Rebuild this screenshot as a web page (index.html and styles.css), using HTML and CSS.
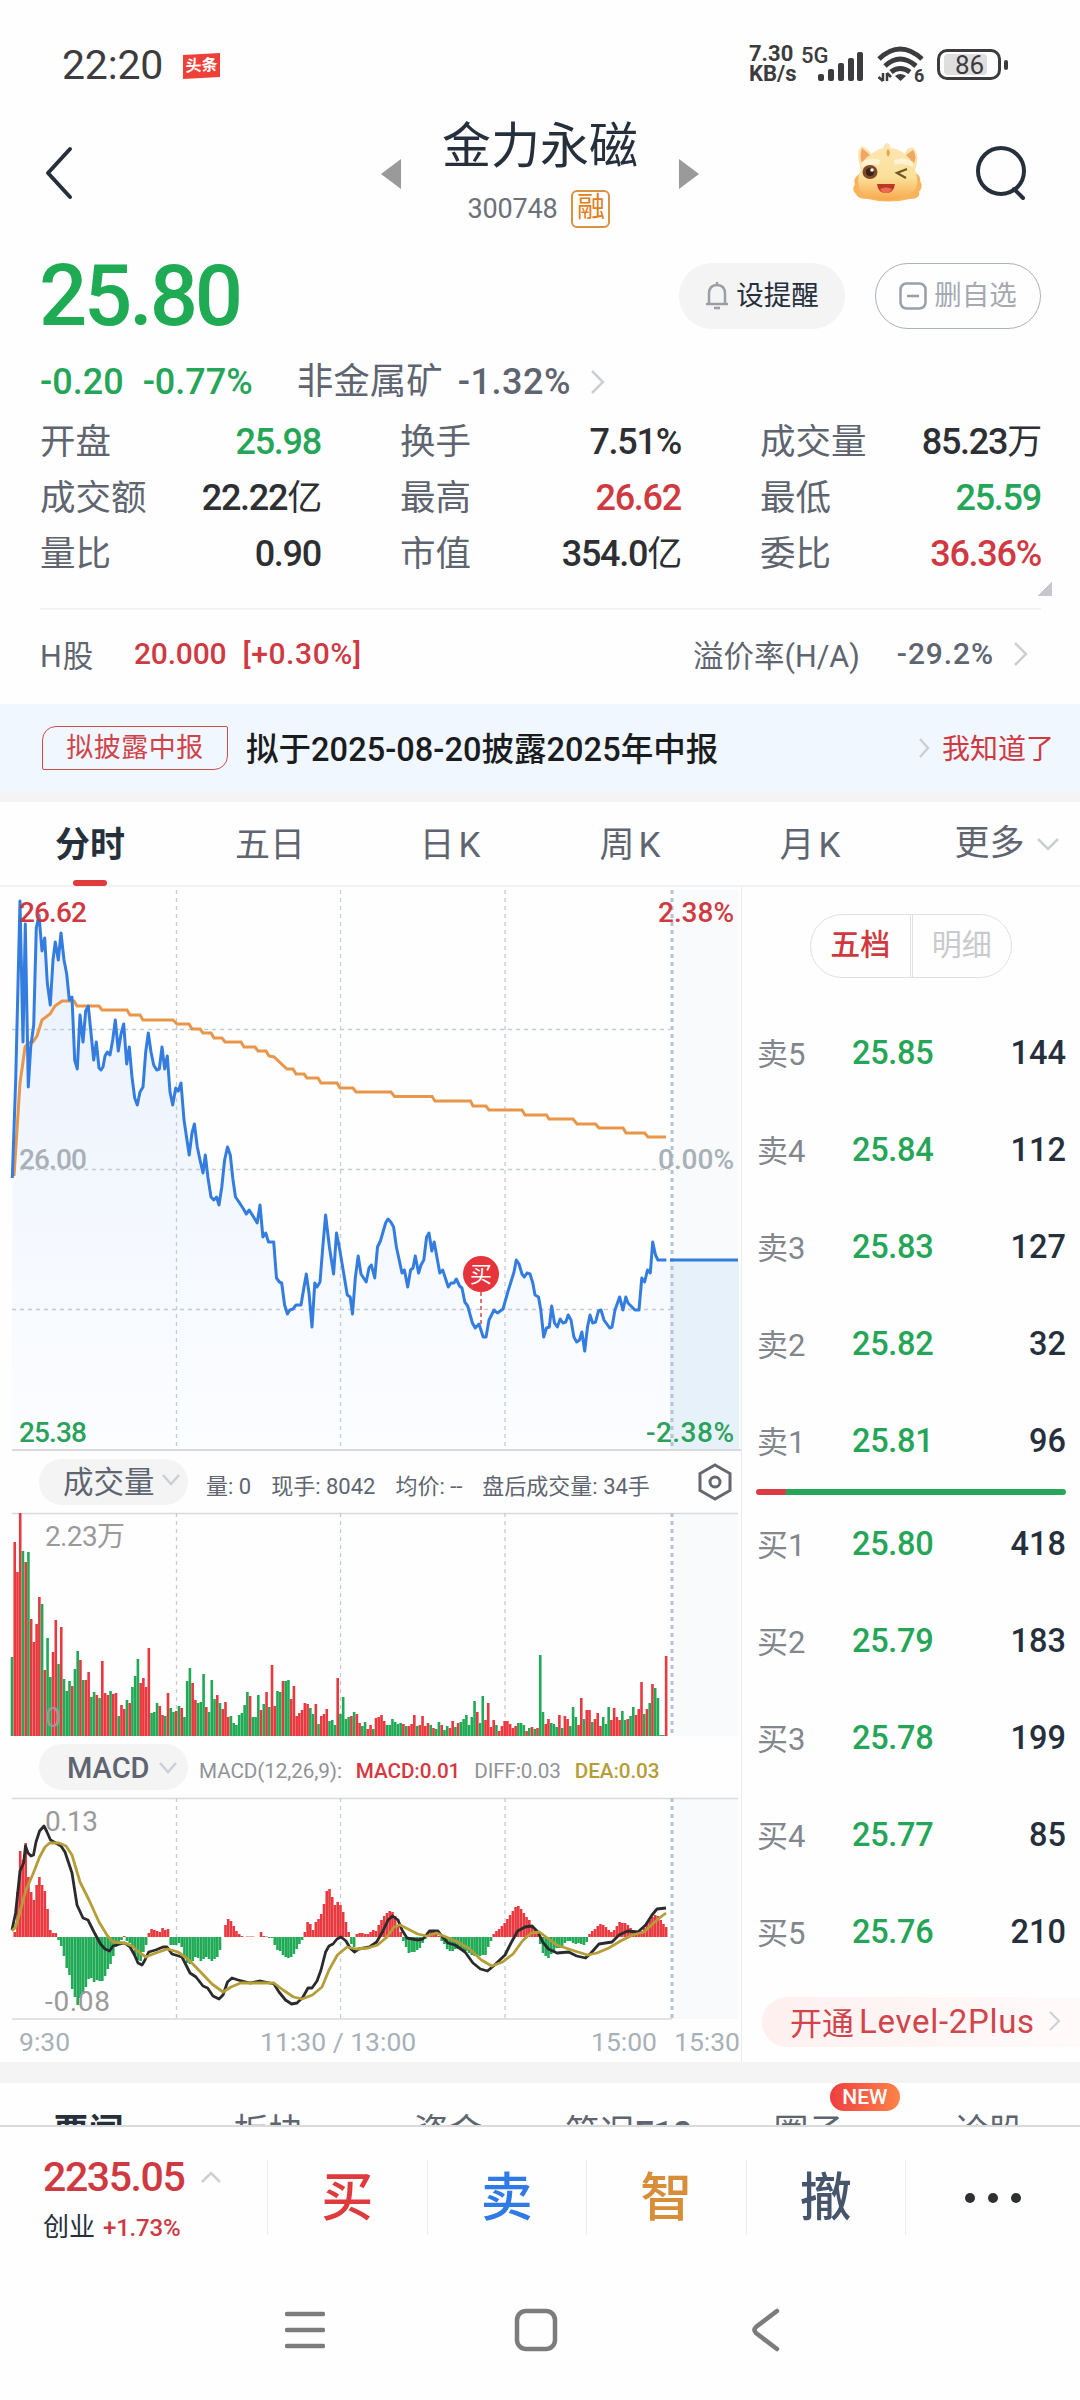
FILE: index.html
```html
<!DOCTYPE html>
<html lang="zh-CN">
<head>
    <meta charset="UTF-8">
    <meta name="viewport" content="width=device-width, initial-scale=1.0">
    <title>金力永磁 300748</title>
    <link rel="stylesheet" href="styles.css">
</head>
<body>
    <div class="status-bar">
        <span class="clock">22:20</span>
        <span class="toutiao">头条</span>
        <div class="status-right">
            <div class="speed"><span>7.30</span><span>KB/s</span></div>
            <span class="net">5G</span>
            <svg class="signal" width="44" height="32" viewBox="0 0 44 32" fill="#3c3c3e">
                <rect x="0" y="23" width="6" height="7" rx="2"/>
                <rect x="10" y="18" width="6" height="12" rx="2"/>
                <rect x="20" y="12" width="6" height="18" rx="2"/>
                <rect x="30" y="7" width="6" height="23" rx="2"/>
                <rect x="39" y="1" width="6" height="29" rx="2"/>
            </svg>
            <svg class="wifi" width="48" height="38" viewBox="0 0 48 38" fill="none" stroke="#3c3c3e" stroke-width="5">
                <path d="M2 13 Q23 -7 45 13"/>
                <path d="M8 20 Q23 6 39 20"/>
                <path d="M14 26 Q23 19 33 26"/>
                <path d="M18 30 Q23 26 29 30 L23.500 35 Z" fill="#3c3c3e" stroke="none"/>
                <path d="M6 27 V35 M1.500 31 L6 35 M10 35 V27 M10 27 L14 31" stroke-width="2.500"/>
                <text x="37" y="36" font-size="18" font-weight="700" fill="#3c3c3e" stroke="none">6</text>
            </svg>
            <div class="battery"><span>86</span></div>
        </div>
    </div>

    <div class="header">
        <svg class="back" width="30" height="54" viewBox="0 0 30 54"><path d="M26 3 L4 27 L26 51"/></svg>
        <div class="title-group">
            <svg width="20" height="30" viewBox="0 0 20 30"><path d="M20 0 L0 15 L20 30 Z" fill="#9a9a9a"/></svg>
            <div class="title">
                <h1>金力永磁</h1>
                <div class="code"><span>300748</span><span class="rong">融</span></div>
            </div>
            <svg width="20" height="30" viewBox="0 0 20 30"><path d="M0 0 L20 15 L0 30 Z" fill="#9a9a9a"/></svg>
        </div>
        <svg class="mascot" width="72" height="64" viewBox="0 0 72 64">
            <defs>
                <linearGradient id="face" x1="0" y1="0" x2="0" y2="1">
                    <stop offset="0" stop-color="#fde6b4"/>
                    <stop offset="0.6" stop-color="#fce09a"/>
                    <stop offset="1" stop-color="#f6a94e"/>
                </linearGradient>
            </defs>
            <path d="M9 33 Q0 38 3 44 Q-1 50 4 54 Q5 59 16 59 Q36 64 58 59 Q69 59 67 52 Q72 46 68 41 Q69 35 63 33 Z" fill="#f7b45c"/>
            <path d="M9 30 Q3 10 10 6 Q17 9 19 14 Q26 9 31 8 Q35 -2 39 8 Q47 9 53 14 Q55 6 62 8 Q68 16 63 30 Q68 44 62 51 Q50 60 36 60 Q16 60 8 50 Q4 40 9 30 Z" fill="url(#face)"/>
            <path d="M10 8 Q7 17 10 23 Q14 17 18 15 Z M61 10 Q66 18 61 24 Q58 18 54 15 Z" fill="#f0a763"/>
            <path d="M36 9 Q40 12 36 17 Q33 12 36 9" fill="#e2a950"/>
            <path d="M10 22 Q18 16 28 20 L27 25 Q18 23 9 27 Z M42 20 Q52 16 61 22 L61 27 Q52 22 43 25 Z" fill="#fff3d3"/>
            <ellipse cx="18" cy="32" rx="7.500" ry="7" fill="#7b4a2b"/>
            <circle cx="18" cy="32" r="4" fill="#3c2114"/>
            <circle cx="20" cy="30" r="1.800" fill="#fff"/>
            <path d="M55 29 L45 33 L54 38" fill="none" stroke="#6b5a20" stroke-width="2.200"/>
            <path d="M25 44 H43 Q42 53 34 53 Q26 53 25 44 Z" fill="#b93a24"/>
            <path d="M28 49 Q34 46 40 49 Q38 53 34 53 Q30 53 28 49" fill="#ee6a50"/>
        </svg>
        <svg class="search" width="54" height="56" viewBox="0 0 54 56"><circle cx="25" cy="25" r="23"/><path d="M38 43 L47 52"/></svg>
    </div>

    <div class="price-row">
        <span class="price">25.80</span>
        <div class="actions">
            <div class="pill remind">
                <svg width="24" height="28" viewBox="0 0 24 28"><path d="M1 22 H23 M4 22 V12 Q4 3 12 3 Q20 3 20 12 V22 M9 26 H15 M12 3 V0"/></svg>
                设提醒
            </div>
            <div class="pill remove">
                <svg width="28" height="28" viewBox="0 0 28 28"><rect x="1.500" y="1.500" width="25" height="25" rx="6"/><path d="M8 14 H20"/></svg>
                删自选
            </div>
        </div>
    </div>

    <div class="change-row">
        <span class="green num">-0.20</span>
        <span class="green num pct">-0.77%</span>
        <span class="industry">非金属矿</span>
        <span class="num ind-pct">-1.32%</span>
        <svg class="chev" width="16" height="26" viewBox="0 0 16 26"><path d="M2 2 L13 13 L2 24"/></svg>
    </div>

    <div class="stats">
        <div class="stat"><span>开盘</span><b class="green">25.98</b></div>
        <div class="stat"><span>换手</span><b>7.51%</b></div>
        <div class="stat"><span>成交量</span><b>85.23<i>万</i></b></div>
        <div class="stat"><span>成交额</span><b>22.22<i>亿</i></b></div>
        <div class="stat"><span>最高</span><b class="red">26.62</b></div>
        <div class="stat"><span>最低</span><b class="green">25.59</b></div>
        <div class="stat"><span>量比</span><b>0.90</b></div>
        <div class="stat"><span>市值</span><b>354.0<i>亿</i></b></div>
        <div class="stat"><span>委比</span><b class="red">36.36%</b></div>
    </div>
    <div class="expand"></div>

    <div class="h-share">
        <span class="h-name">H股</span>
        <span class="red num">20.000</span>
        <span class="red num h-pct">[+0.30%]</span>
        <span class="premium">溢价率(H/A)</span>
        <span class="num h-rate">-29.2%</span>
        <svg class="chev" width="16" height="26" viewBox="0 0 16 26"><path d="M2 2 L13 13 L2 24"/></svg>
    </div>

    <div class="notice">
        <span class="tag">拟披露中报</span>
        <span class="notice-text">拟于2025-08-20披露2025年中报</span>
        <svg class="chev" width="13" height="22" viewBox="0 0 13 22"><path d="M2 2 L10 11 L2 20"/></svg>
        <span class="know">我知道了</span>
    </div>

    <div class="tabs">
        <span class="tab active">分时</span>
        <span class="tab">五日</span>
        <span class="tab">日<i>K</i></span>
        <span class="tab">周<i>K</i></span>
        <span class="tab">月<i>K</i></span>
        <span class="tab more">更多<svg class="chev" width="22" height="14" viewBox="0 0 22 14"><path d="M1 2 L11 12 L21 2"/></svg></span>
    </div>

    <div class="main">
        <div class="charts">
            <svg id="price-chart" width="741" height="563" viewBox="0 0 741 563">
                <defs>
                    <linearGradient id="area" x1="0" y1="0" x2="0" y2="1">
                        <stop offset="0" stop-color="#e9f1fd"/>
                        <stop offset="1" stop-color="#fcfdff"/>
                    </linearGradient>
                </defs>
                <rect x="672" y="2" width="66" height="560" fill="#f9fafb"/>
                <rect x="669" y="372" width="70" height="190" fill="#e7f1fa"/>
                <path id="price-area" fill="url(#area)"/>
                <g class="grid">
                    <path d="M176.500 2 V561 M340.500 2 V561 M505 2 V561 M12 141.500 H670 M12 281.500 H670 M12 421.500 H670"/>
                    <path d="M672 2 V561" class="close-line"/>
                </g>
                <path d="M12 562 H741" stroke="#d8dadd" stroke-width="2"/>
                <polyline id="avg-line" fill="none" stroke="#e8964a" stroke-width="3"/>
                <polyline id="price-line" fill="none" stroke="#347de0" stroke-width="3" stroke-linejoin="round"/>
                <path d="M670 372 H738" stroke="#347de0" stroke-width="3"/>
                <path d="M481 404 V438" stroke="#d9484e" stroke-width="1.500" stroke-dasharray="4 3"/>
                <circle cx="481" cy="386" r="18" fill="#e5343c"/>
                <text x="481" y="394" font-size="22" fill="#fff" text-anchor="middle">买</text>
                <g class="label strong">
                    <text x="19" y="34" textLength="68" fill="#cf3a42">26.62</text>
                    <text x="658" y="34" textLength="76" fill="#cf3a42">2.38%</text>
                    <text x="19" y="281" textLength="68" fill="#a8b0b8">26.00</text>
                    <text x="658" y="281" textLength="76" fill="#a8b0b8">0.00%</text>
                    <text x="19" y="554" textLength="68" fill="#2aa25a">25.38</text>
                    <text x="646" y="554" textLength="88" fill="#2aa25a">-2.38%</text>
                </g>
            </svg>

            <div class="indicator vol-head">
                <div class="select">成交量<svg class="chev" width="18" height="12" viewBox="0 0 18 12"><path d="M1 1 L9 10 L17 1"/></svg></div>
                <div class="vol-info">
                    <span>量: 0</span><span>现手: 8042</span><span>均价: --</span><span>盘后成交量: 34手</span>
                </div>
                <svg class="gear" width="36" height="38" viewBox="0 0 36 38"><path d="M18 2 L33 10.500 V27.500 L18 36 L3 27.500 V10.500 Z"/><circle cx="18" cy="19" r="5"/></svg>
            </div>

            <svg id="vol-chart" width="741" height="228" viewBox="0 0 741 228">
                <rect x="672" y="1" width="66" height="223" fill="#f9fafb"/>
                <path d="M12 1.500 H738" stroke="#d8dadd" stroke-width="1.500"/>
                <g class="grid">
                    <path d="M176.500 1 V223 M340.500 1 V223 M505 1 V223"/>
                    <path d="M672 1 V223" class="close-line"/>
                </g>
                <g id="vol-bars"></g>
                <g class="label" fill="#9a9a9a">
                    <text x="45" y="34" textLength="80">2.23万</text>
                    <text x="45" y="215">0</text>
                </g>
            </svg>

            <div class="indicator macd-head">
                <div class="select macd">MACD<svg class="chev" width="18" height="12" viewBox="0 0 18 12"><path d="M1 1 L9 10 L17 1"/></svg></div>
                <div class="macd-info">
                    <span>MACD(12,26,9):</span><span class="m-red">MACD:0.01</span><span>DIFF:0.03</span><span class="m-gold">DEA:0.03</span>
                </div>
            </div>

            <svg id="macd-chart" width="741" height="223" viewBox="0 0 741 223">
                <rect x="672" y="1" width="66" height="221" fill="#f9fafb"/>
                <path d="M12 1.500 H738 M12 222 H672" stroke="#d8dadd" stroke-width="1.500"/>
                <g class="grid">
                    <path d="M176.500 1 V222 M340.500 1 V222 M505 1 V222"/>
                    <path d="M672 1 V222" class="close-line"/>
                </g>
                <g id="macd-bars"></g>
                <g class="label" fill="#9a9a9a">
                    <text x="45" y="34" textLength="53">0.13</text>
                    <text x="45" y="214" textLength="65">-0.08</text>
                </g>
                <polyline id="diff-line" fill="none" stroke="#2b2b2d" stroke-width="2.800" stroke-linejoin="round"/>
                <polyline id="dea-line" fill="none" stroke="#b59d38" stroke-width="2.800" stroke-linejoin="round"/>
            </svg>

            <div class="axis">
                <span>9:30</span><span class="noon">11:30 / 13:00</span><span class="close">15:00</span><span class="after">15:30</span>
            </div>
        </div>

        <div class="book">
            <div class="toggle"><span class="on">五档</span><span>明细</span></div>
            <div class="orders sells">
                <div class="order"><span>卖5</span><b>25.85</b><em>144</em></div>
                <div class="order"><span>卖4</span><b>25.84</b><em>112</em></div>
                <div class="order"><span>卖3</span><b>25.83</b><em>127</em></div>
                <div class="order"><span>卖2</span><b>25.82</b><em>32</em></div>
                <div class="order"><span>卖1</span><b>25.81</b><em>96</em></div>
            </div>
            <div class="ratio"></div>
            <div class="orders">
                <div class="order"><span>买1</span><b>25.80</b><em>418</em></div>
                <div class="order"><span>买2</span><b>25.79</b><em>183</em></div>
                <div class="order"><span>买3</span><b>25.78</b><em>199</em></div>
                <div class="order"><span>买4</span><b>25.77</b><em>85</em></div>
                <div class="order"><span>买5</span><b>25.76</b><em>210</em></div>
            </div>
            <div class="level2">开通<span>Level-2Plus</span><svg class="chev" width="13" height="22" viewBox="0 0 13 22"><path d="M2 2 L11 11 L2 20"/></svg></div>
        </div>
    </div>

    <div class="news-tabs">
        <span class="on">要闻</span>
        <span>板块</span>
        <span>资金</span>
        <span>简况<b>F10</b></span>
        <span>圈子</span>
        <span>诊股</span>
        <div class="new-badge">NEW</div>
    </div>

    <div class="trade-bar">
        <div class="index">
            <div class="index-value">2235.05<svg class="chev" width="20" height="12" viewBox="0 0 20 12"><path d="M1 11 L10 2 L19 11"/></svg></div>
            <div class="index-name">创业<span>+1.73%</span></div>
        </div>
        <div class="trade buy">买</div>
        <div class="trade sell">卖</div>
        <div class="trade smart">智</div>
        <div class="trade cancel">撤</div>
        <div class="trade dots"><i></i><i></i><i></i></div>
    </div>

    <div class="nav-bar">
        <svg width="40" height="44" viewBox="0 0 40 44"><path d="M2 6 H38 M2 22 H38 M2 38 H38"/></svg>
        <svg width="44" height="44" viewBox="0 0 44 44"><rect x="3" y="3" width="38" height="38" rx="9"/></svg>
        <svg width="30" height="44" viewBox="0 0 30 44"><path d="M26 3 L5 19 Q2 22 5 25 L26 41"/></svg>
    </div>

    <script src="chart.js"></script>
</body>
</html>
```
FILE: styles.css
```css
* {
    box-sizing: border-box;
}
body {
    margin: 0;
    width: 1080px;
    height: 2400px;
    overflow: hidden;
    background: #fefefe;
    color: #26303d;
    font-family: Roboto, "Noto Sans CJK SC", sans-serif;
}
svg {
    display: block;
    flex: none;
}
span, b, em, .pill, .trade {
    white-space: nowrap;
}
.green {
    color: #25a557;
}
.red {
    color: #cf3a42;
}
.chev {
    fill: none;
    stroke: #ccd0d5;
    stroke-width: 2.5;
}

/* status bar */
.status-bar {
    height: 130px;
    padding: 0 79px 0 62px;
    display: flex;
    align-items: center;
    color: #3c3c3e;
}
.clock {
    font-size: 41px;
    line-height: 44px;
    letter-spacing: -0.2px;
    width: 121px;
}
.toutiao {
    width: 37px;
    height: 24px;
    background: #ee4039;
    color: #fff;
    font-size: 16px;
    font-weight: 700;
    line-height: 23px;
    text-align: center;
    transform: skewY(-3deg);
    margin-top: 2px;
}
.status-right {
    margin-left: auto;
    height: 40px;
    display: flex;
    align-items: flex-start;
}
.speed {
    display: flex;
    flex-direction: column;
    width: 52px;
    margin-top: -1px;
    font-size: 22px;
    font-weight: 700;
    line-height: 20px;
}
.net {
    width: 17px;
    font-size: 22px;
    font-weight: 500;
    line-height: 22px;
}
.signal {
    margin: 6px 15px 0 0;
    overflow: visible;
}
.wifi {
    margin: 1px 12px 0 0;
    overflow: visible;
}
.battery {
    width: 64px;
    height: 31px;
    margin-top: 4px;
    border: 3px solid #3c3c3e;
    border-radius: 10px;
    padding: 2px 12px 2px 4px;
    position: relative;
}
.battery span {
    display: block;
    background: #dedede;
    border-radius: 4px;
    font-size: 26px;
    line-height: 22px;
    padding-left: 11px;
    width: 43px;
    height: 21px;
}
.battery::after {
    content: "";
    position: absolute;
    right: -10px;
    top: 8px;
    width: 4px;
    height: 10px;
    border-radius: 2px;
    background: #3c3c3e;
}

/* header */
.header {
    height: 116px;
    padding: 0 50px 0 44px;
    display: flex;
    align-items: flex-start;
}
.back, .search {
    fill: none;
    stroke: #26303d;
    stroke-width: 4;
    stroke-linecap: round;
    stroke-linejoin: round;
    margin-top: 16px;
}
.title-group {
    width: 318px;
    margin-left: 307px;
    display: flex;
    justify-content: space-between;
}
.title-group > svg {
    margin-top: 29px;
}
.title h1 {
    margin: -16px 0 0;
    font-size: 49px;
    font-weight: 400;
    line-height: 66px;
}
.code {
    display: flex;
    justify-content: center;
    align-items: center;
    gap: 14px;
    margin-top: 10px;
    margin-right: 2px;
    font-size: 27px;
    letter-spacing: -0.2px;
    line-height: 38px;
    color: #6d7079;
}
.rong {
    width: 39px;
    height: 38px;
    border: 2px solid #d9923f;
    border-radius: 6px;
    color: #e07f1c;
    font-size: 28px;
    line-height: 32px;
    text-align: center;
}
.mascot {
    margin: 10px 0 0 153px;
}
.search {
    margin-left: auto;
}

/* price */
.price-row {
    height: 99px;
    padding: 0 39px 0 39px;
    display: flex;
    justify-content: space-between;
    align-items: center;
}
.price {
    font-size: 85px;
    font-weight: 500;
    letter-spacing: -3.2px;
    line-height: 99px;
    padding-top: 2px;
    color: #1fab54;
}
.actions {
    display: flex;
    gap: 30px;
}
.pill {
    width: 166px;
    height: 66px;
    border-radius: 33px;
    display: flex;
    align-items: center;
    justify-content: center;
    font-size: 27.5px;
    line-height: 40px;
}
.pill svg {
    fill: none;
    stroke: #9a9fa6;
    stroke-width: 2.5;
    margin-right: 7px;
}
.remind {
    background: #f4f4f4;
}
.remove {
    border: 1.5px solid #a9b3b8;
    color: #a5a9b2;
}
.change-row {
    height: 70px;
    padding: 4px 0 0 40px;
    display: flex;
    align-items: center;
    font-size: 36.5px;
    line-height: 50px;
    color: #5f6570;
}
.num {
    font-weight: 500;
}
.change-row .num {
    font-size: 36px;
}
.change-row .pct {
    margin-left: 19px;
}
.industry {
    margin-left: 44px;
}
.ind-pct {
    margin: 0 19px 0 15px;
    letter-spacing: 0.5px;
}

/* stats grid */
.stats {
    padding: 0 39px 0 40px;
    display: grid;
    grid-template-columns: 281px 281px 281px;
    column-gap: 79px;
    grid-auto-rows: 56px;
    margin-top: -1px;
}
.stat {
    display: flex;
    justify-content: space-between;
    align-items: center;
    font-size: 35.5px;
    line-height: 50px;
    color: #5f6570;
}
.stat b {
    font-weight: 500;
    font-size: 36px;
    letter-spacing: -0.035em;
    color: #2d2f33;
}
.stat b.green {
    color: #25a557;
}
.stat b.red {
    color: #cf3a42;
}
.stat i {
    font-style: normal;
    font-size: 35px;
    font-weight: 400;
}
.expand {
    margin: -1px 28px 0 auto;
    width: 14px;
    height: 15px;
    background: linear-gradient(135deg, transparent 50%, #c5c9ce 50%);
}
.h-share {
    margin: 12px 39px 0 40px;
    border-top: 2px solid #f1f2f4;
    height: 96px;
    padding-bottom: 7px;
    display: flex;
    align-items: center;
    font-size: 30.5px;
    color: #5f6570;
}
.h-share .num {
    font-size: 30px;
    letter-spacing: -0.2px;
}
.h-share .chev {
    margin: 0 12px 0 19px;
}
.h-name {
    width: 94px;
    letter-spacing: 1px;
}
.h-share .h-pct {
    margin-left: 16px;
    letter-spacing: 0.6px;
}
.h-share .h-rate {
    letter-spacing: 0.9px;
}
.premium {
    margin: 0 37px 0 auto;
}

/* notice */
.notice {
    height: 88px;
    padding: 0 26px 0 42px;
    display: flex;
    align-items: center;
    background: #f0f7ff;
}
.tag {
    width: 186px;
    height: 44px;
    border: 1.5px solid #cf4a50;
    border-radius: 14px 2px 14px 2px;
    color: #d0434a;
    font-size: 27px;
    line-height: 42px;
    letter-spacing: 0.5px;
    text-align: center;
}
.notice-text {
    margin: -4px 0 0 18px;
    font-size: 32.5px;
    font-weight: 500;
    letter-spacing: 0.05px;
    color: #1b1c1e;
}
.notice .chev {
    margin: 0 11px 0 auto;
}
.know {
    margin-top: -3px;
    font-size: 28px;
    color: #cf3a42;
}

/* tabs */
.tabs {
    height: 95px;
    border-top: 10px solid #f4f4f4;
    border-bottom: 2px solid #f1f2f4;
    display: flex;
}
.tab {
    width: 180px;
    text-align: center;
    font-size: 35px;
    line-height: 88px;
    height: 83px;
    color: #5f6570;
}
.tab i {
    font-style: normal;
    margin-left: 4px;
}
.tab.active {
    color: #26303d;
    font-weight: 700;
}
.tab.active::after {
    content: "";
    display: block;
    width: 34px;
    height: 6px;
    margin: -10px auto 0;
    border-radius: 3px;
    background: #e03c3c;
}
.more {
    display: flex;
    justify-content: center;
    align-items: center;
    gap: 12px;
    padding-left: 33px;
}

/* charts */
.main {
    display: flex;
    height: 1175px;
}
.charts {
    width: 742px;
    border-right: 1px solid #ececee;
    flex: none;
    padding-top: 1px;
}
.grid path {
    fill: none;
    stroke: #c3ccd2;
    stroke-width: 1.3;
    stroke-dasharray: 4 4;
}
.grid .close-line {
    stroke: #b5c3d3;
    stroke-width: 3;
}
.label {
    font-size: 28px;
}
.strong {
    font-weight: 500;
}
.indicator {
    display: flex;
    align-items: center;
    padding-left: 39px;
    font-size: 22px;
    color: #5f6570;
}
.vol-head {
    height: 61px;
}
.select {
    width: 149px;
    height: 46px;
    border-radius: 23px;
    background: #f4f4f4;
    display: flex;
    align-items: center;
    padding: 0 0 3px 24px;
    gap: 7px;
    font-size: 30.5px;
}
.macd {
    padding: 1px 0 0 28px;
    gap: 9px;
    font-size: 29px;
    font-weight: 500;
    letter-spacing: 0;
}
.vol-info {
    display: flex;
    gap: 20px;
    margin: 4px 0 0 18px;
    font-size: 22px;
    width: 491px;
}
.macd-info span {
    letter-spacing: -0.1px;
}
.gear {
    fill: none;
    stroke: #63676f;
    stroke-width: 3;
}
.macd-head {
    height: 57px;
    padding-bottom: 3px;
}
.macd-info {
    display: flex;
    gap: 14px;
    margin: 7px 0 0 11px;
    font-size: 20.7px;
    color: #909297;
}
.m-red {
    color: #d8373f;
    font-weight: 500;
}
.m-gold {
    color: #b59d38;
    font-weight: 500;
}
.axis {
    display: flex;
    font-size: 26.5px;
    line-height: 44px;
    padding: 0 1px 0 19px;
    color: #a8b0b8;
}
.noon {
    margin-left: 190px;
}
.close {
    margin-left: auto;
}
.after {
    margin-left: 17px;
}

/* order book */
.book {
    flex: 1;
    padding: 27px 0 0 14px;
}
.toggle {
    width: 202px;
    height: 64px;
    margin-left: 54px;
    border: 1.5px solid #dfe1e3;
    border-radius: 32px;
    display: flex;
    color: #c9cacc;
}
.toggle span {
    flex: 1;
    text-align: center;
    font-size: 30px;
    line-height: 60px;
}
.toggle .on {
    color: #d0383e;
    font-weight: 500;
    border-right: 3px double #dfe1e3;
}
.orders {
    padding-right: 14px;
}
.sells {
    margin-top: 26px;
}
.order {
    height: 97px;
    display: flex;
    align-items: center;
    font-size: 32.5px;
}
.order span {
    width: 96px;
    padding-left: 1px;
    padding-bottom: 2px;
    font-size: 31px;
    color: #82868d;
}
.order b {
    font-weight: 500;
    letter-spacing: -0.3px;
    color: #25a557;
}
.order em {
    font-style: normal;
    font-weight: 500;
    margin-left: auto;
}
.ratio {
    width: 310px;
    height: 6px;
    border-radius: 3px;
    background: linear-gradient(105deg, #dc3b41 9.7%, #27a559 9.9%);
}
.level2 {
    margin: 17px 0 0 6px;
    height: 50px;
    border-radius: 25px 0 0 25px;
    background: linear-gradient(90deg, #fff0f0, #fffafa);
    display: flex;
    align-items: center;
    padding: 0 0 2px 28px;
    font-size: 32px;
    color: #d0444a;
}
.level2 span {
    margin-left: 5px;
    font-size: 33px;
    letter-spacing: 0.7px;
}
.level2 .chev {
    margin-left: 13px;
    stroke-width: 2;
}

/* news tabs, cut by the trade bar */
.news-tabs {
    border-top: 21px solid #f4f4f4;
    height: 63px;
    overflow: hidden;
    display: flex;
    position: relative;
    font-size: 35px;
    line-height: 50px;
    color: #5f6570;
}
.news-tabs span {
    width: 180px;
    text-align: center;
    padding: 25px 3px 0 0;
}
.news-tabs .on {
    color: #26303d;
    font-weight: 700;
}
.news-tabs b {
    font-weight: 700;
    font-size: 34px;
}
.new-badge {
    position: absolute;
    left: 830px;
    top: 0;
    width: 70px;
    height: 28px;
    border-radius: 14px;
    background: linear-gradient(90deg, #ee3f3f, #ff8248);
    color: #fff;
    font-size: 21px;
    font-weight: 500;
    line-height: 29px;
    text-align: center;
}

/* bottom */
.trade-bar {
    height: 145px;
    border-top: 2px solid #d9dadc;
    display: flex;
    align-items: flex-start;
    padding-top: 33px;
}
.index {
    width: 267px;
    padding-left: 43px;
}
.index-value {
    display: flex;
    align-items: center;
    gap: 17px;
    font-size: 41px;
    font-weight: 500;
    letter-spacing: -1.4px;
    line-height: 34px;
    color: #cf3a42;
}
.index-name {
    margin-top: 16px;
    font-size: 26px;
    line-height: 34px;
}
.index-name span {
    margin-left: 8px;
    font-size: 24px;
    font-weight: 500;
    letter-spacing: -0.2px;
    color: #cf3a42;
}
.trade {
    width: 159.5px;
    height: 75px;
    border-left: 1px solid #ececee;
    font-size: 52px;
    font-weight: 500;
    line-height: 77px;
    text-align: center;
}
.buy {
    color: #de3b3e;
}
.sell {
    color: #2f7ae5;
}
.smart {
    color: #d88d38;
}
.cancel {
    color: #46556c;
}
.dots {
    display: flex;
    justify-content: center;
    align-items: center;
    gap: 13px;
    padding-left: 15px;
}
.dots i {
    width: 10px;
    height: 10px;
    border-radius: 50%;
    background: #2d2f33;
}
.nav-bar {
    height: 119px;
    display: flex;
    align-items: center;
    padding-left: 285px;
}
.nav-bar svg {
    fill: none;
    stroke: #7c7c7c;
    stroke-width: 4.5;
    stroke-linecap: round;
}
.nav-bar svg + svg {
    margin-left: 189px;
}
.nav-bar svg:last-child {
    margin-left: 193px;
}
```
FILE: chart.js
```js
const START_X = 12;
const STEP = 2.737;
const RED = "#e9383e";
const GREEN = "#20aa55";

const pricePoints = "12.3,290 15.7,192 20,13 23,154 25.3,36 28.3,199 30.7,159 33.7,137 36.3,40 39,27 42,63 44.7,50 47.3,95 50.3,117 53,72 55.3,54 58.3,72 61,45 64,72 66.7,86 69.3,112 72,109 74.7,172 77.3,181 80,127 83,154 85.7,123 88.3,118 91,145 93.7,172 96.3,154 99,180 101,182 103,179 105,168 107.3,164 110,167 112.7,152 115.3,132 118.3,163 121,146 123.7,136 126.7,176 129.3,159 132,189 134.7,210 137.3,217 140,204 143,199 145.7,164 148.3,145 151,164 153.7,177 156.7,182 159.3,181 162,159 164.7,181 167.3,168 170,204 172.7,217 175.7,200 178.3,203 181,195 184,232 189.2,267 192,245 194.4,236 197.3,259 200,272 203,285 205.3,267 208,290 211,309 213.8,312 216.6,309 219,317 221.8,299 224.6,272 227.5,259 230.3,267 233,292 235.5,309 238.3,313 243.5,321 246.3,326 249.2,322 254.8,331 257.2,335 260,317 262.9,349 265.7,345 268.5,354 273.7,354 276.5,390 279.4,394 281.7,395 284.6,417 287.4,426 289.8,422 293,421 296,417 301,417 304,399 306.3,386 309,405 312,439 314.8,395 317,399 320,394 322.8,359 325.6,327 329.4,359 333.6,386 336.5,345 339.8,362 347.3,407 350.2,409 352.5,426 355.4,389 358.2,368 361,386 366.2,394 369,380 371.4,377 374.7,390 377.5,359 380.4,353 385.6,335 388,331 390.8,334 393.6,339 396.4,359 402,385 404.4,382 407.7,399 410.6,382 413,380 415.3,368 418.6,385 421,377 423.8,372 426.6,349 429,345 431.8,363 434.2,354 439.8,385 442.7,382 448.3,399 451,395 454,395 456.3,391 459.6,398 462,400 464.8,414 467.7,418 472.4,435 475.2,440 479,436 483.2,449 486,449 489,432 494,422 497.4,425 503,421 507.8,404 514,384 516.3,372 519,376 522,386 524.3,389 527,385 530,386 532.8,395 535,407 538.5,409 540.8,422 543.7,449 546.5,440 549.3,439 551.7,418 554.5,435 557.3,439 560.2,431 563,435 565.8,434 568.2,427 571,432 573.9,449 576.7,454 579.5,452 581.9,444 584.7,463 587.5,439 590,427 592.7,435 595.6,434 598.4,423 601,422 604,432 609.7,440 612,439 615,422 619.6,409 623,422 625.8,409 628,415 631,418 635,422 639,422 641.8,390 644.6,394 647.5,382 650.3,385 652.7,354 655.5,367 657.9,372 666.4,372";

const avgPoints = "14,288 17,242 20,195 23,174 25,159 28,155 33,154 37,148 42,132 50,126 55,118 62,113 74,113 77,118 99,118 102,122 127,122 130,127 140,127 143,132 173,132 177,136 189,136 192,141 200,141 203,145 211,145 214,150 222,150 225,154 241,154 244,159 255,159 258,163 266,163 269,168 274,169 287,181 293,181 296,186 304,186 307,190 318,190 321,195 337,195 340,200 353,200 356,204 391,204 394.5,208.5 432,208.5 435,213 470.5,213 473,218 486,218 489,222 522,222 525,227 546.5,227 549,231 573,231 577,236 595.6,236 599,240 623,240 626,245 644.6,245 648,249 666,249";

// one entry per minute: r = up, g = down
const volumes = "g79 r194 r164 r223 g185 r174 g184 r117 r94 r112 r139 g132 r66 g98 g59 r84 r116 g72 r109 g57 g45 g55 r50 g67 g85 r76 g56 r56 r64 g39 g44 r41 g38 r75 r43 r41 g45 r42 r43 g20 r31 r27 g36 r33 g49 g60 g77 r53 r58 r49 r88 g23 g24 g33 r30 r21 g20 r43 g28 g24 r25 g30 r28 g19 g55 g68 r53 r36 g33 g34 g62 r29 g24 g56 g37 r41 g33 r27 r34 r19 g20 g13 g11 g21 g23 g31 g44 r40 g19 g19 g41 r26 g32 r44 g29 r71 r30 g45 g44 r55 g55 g56 r37 r50 r20 r23 r26 r33 r32 g28 g22 r32 g12 r20 r22 r27 g15 g16 g11 r58 g22 g39 g17 g19 r20 g24 r22 r13 g10 g14 r7 r11 g7 r18 r19 r21 r15 g11 g11 g17 g14 g12 g13 r12 g10 r10 r12 r21 g10 r11 r20 r10 r13 g11 r8 g7 g14 r11 g6 g10 r8 r15 g9 r13 g14 g17 g21 g11 g19 g35 r24 g13 g40 r16 r33 r9 r16 g11 r5 r10 r15 r15 r12 r8 r10 g13 g13 g11 r5 g8 r9 g7 r8 g81 g24 r12 r17 g13 g12 g9 r21 g8 r20 r17 g10 g29 g19 r11 r38 g17 r26 r26 g14 r17 r23 r10 g19 g12 g29 r16 r28 r19 r16 g25 g16 r17 g20 g29 r21 r27 r54 g22 r27 g33 r52 g48 g38 g1 g1 r80";

const macd = [
    0, 5, 45, 86, 77, 94, 60, 45, 37, 52, 60, 52, 46, 28, 7, 4, 4, -3, -9, -19,
    -31, -38, -52, -60, -68, -61, -57, -50, -42, -41, -45, -43, -44, -44, -39, -32, -27, -19, -10, -5,
    -3, 1, -4, -6, -11, -18, -23, -24, -15, -8, 4, 8, 7, 6, 5, 9, 7, 8, -8, -8,
    -8, -6, -10, -19, -26, -27, -24, -20, -21, -24, -22, -20, -22, -24, -22, -20, -13, 0, 12, 18,
    16, 11, 6, 3, 1, 0, 0.5, 0.5, 0.5, 0, 0, 5, 1, 0.5, -1, -1, -8, -13, -14, -18,
    -20, -21, -20, -17, -12, -7, -3, 5, 15, 13, 7, 15, 18, 23, 33, 46, 48, 40, 32, 35,
    32, 25, 15, 5, -7, -10, 3, 4, 4, 3, 3, 5, 7, 6, 12, 17, 21, 24, 26, 25,
    21, 12, 5, -4, -10, -16, -15, -15, -13, -11, -6, -2, 3, 7, 7, 5, 1, -4, -7, -12,
    -14, -14, -12, -12, -13, -13, -14, -16, -18, -19, -18, -19, -18, -18, -10, -4, 3, 6, 8, 11,
    14, 18, 22, 26, 30, 31, 28, 24, 20, 17, 12, 7, 3, -7, -16, -19, -21, -17, -14, -11,
    -11, -11, -6, -4, -4, -6, -7, -6, -7, -8, -5, 3, 6, 8, 11, 13, 12, 10, 7, 5,
    7, 11, 15, 14, 14, 12, 9, 7, 6, 4, 6, 9, 13, 17, 20, 22, 21, 17, 13, 10
];

const diffPoints = "12,133 15.6,116 20,74 23.6,66 25.5,49 28,56 31,59 33.5,58 36,45 39.6,34 44,29 47,35 50.5,43 55.7,46 61,49 65,55 72,76 77,108 83,121 88,123 94,135 100.5,147 105,152 109.5,154 113,149 120,147 124.6,146 130,150 134.5,158 138,166 142,168 145,163 148.7,155 155.7,153 163,150 167,150 172,157 182,160 190,176 196,180 203,189 207.6,191 213,199 219,202 223,198 227.5,185 232,181 238,183 250,186 260.5,184 274,187 279,195 285.5,203 291.6,207 297,206 303,200 308,191 312,191 317,184 321,173 325.6,155 329,149 333,147 337,142 341,140 346,144 350,151 354.4,155 358.7,152 369.5,150 376.6,145 383,134 388,123 392.6,119 398,123 402,133 407,141 417.6,143 423,142 429.4,134 438,134 442.7,140 448,146 455,148 465,155 473,166 480.4,172 487.5,174 494.6,168 505,158 511,146 517.7,134 525,130 532,129 538,135 542.7,145 548.4,152 557,156 568.7,155 576.7,159 585.6,161 591,156 599,147 612,145 619,138 627.7,134 638,135 645.6,128 652,118 657,112 666,111";

const deaPoints = "12,134 15.6,130 20,115 26,93 33,77 39.6,60 45,50 49.6,46 59,46 66,49 72,58 80,85 89,103 99,125 107.6,139 113,145 125,146 132,149 140,156 146,160 153,157 167.5,152 178,155 189,163 200.6,175 212,187 223,195 231,190 240.7,186 274,186 283,193 293.5,200 302,202 312.4,198 322,190 329,173 337.4,158 347,150 356,152 368,151 377.5,148 387,140 394,130 400,128 408,132 417.6,137 427,139 436.5,136 446,140 457.8,145 469.6,152 481.4,163 491.7,169 502.6,165 513,157 522.4,144 531,136 539.4,135 547.4,141 557,148 568.7,152 578,155 587.5,158 597,156 608.8,151 620.6,144 632.4,138 644,135 653.6,126 660.7,120 666,116";

document.getElementById("price-line").setAttribute("points", pricePoints);
document.getElementById("price-area").setAttribute("d", `M12,561 L${pricePoints} L670,372 L670,561 Z`);
document.getElementById("avg-line").setAttribute("points", avgPoints);
document.getElementById("diff-line").setAttribute("points", diffPoints);
document.getElementById("dea-line").setAttribute("points", deaPoints);

function addBar(group, index, y, height, color) {
    const rect = document.createElementNS("http://www.w3.org/2000/svg", "rect");
    rect.setAttribute("x", START_X + index * STEP - 1.3);
    rect.setAttribute("y", y);
    rect.setAttribute("width", 2.6);
    rect.setAttribute("height", height);
    rect.setAttribute("fill", color);
    group.appendChild(rect);
}

const volBars = document.getElementById("vol-bars");
volumes.split(" ").forEach((item, i) => {
    const height = Number(item.slice(1));
    addBar(volBars, i, 224 - height, height, item[0] === "r" ? RED : GREEN);
});

const macdBars = document.getElementById("macd-bars");
macd.forEach((value, i) => {
    addBar(macdBars, i, value > 0 ? 140 - value : 140, Math.abs(value), value > 0 ? RED : GREEN);
});
```
